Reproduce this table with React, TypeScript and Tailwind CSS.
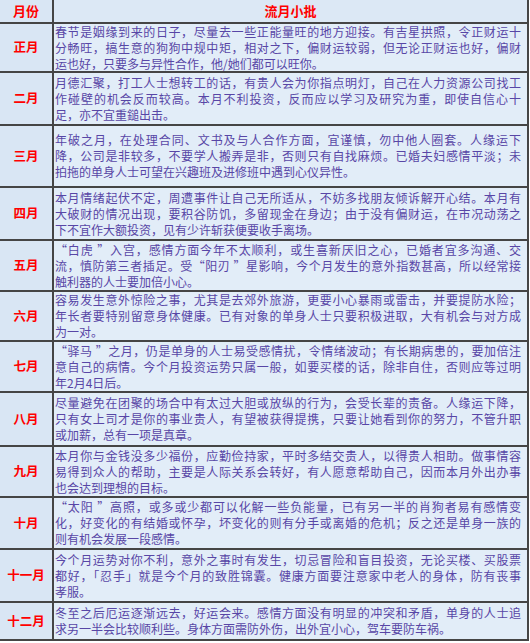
const rows = [
  {
    m: '正月',
    h: 'h-[49px]',
    lines: [
      '春节是姻缘到来的日子，尽量去一些正能量旺的地方迎接。有吉星拱照，令正财运十',
      '分畅旺，搞生意的狗狗中规中矩，相对之下，偏财运较弱，但无论正财运也好，偏财',
      '运也好，只要多与异性合作，他/她们都可以旺你。',
    ],
  },
  {
    m: '二月',
    h: 'h-[53px]',
    lines: [
      '月德汇聚，打工人士想转工的话，有贵人会为你指点明灯，自己在人力资源公司找工',
      '作碰壁的机会反而较高。本月不利投资，反而应以学习及研究为重，即使自信心十',
      '足，亦不宜重鎚出击。',
    ],
  },
  {
    m: '三月',
    h: 'h-[62px]',
    lines: [
      '年破之月，在处理合同、文书及与人合作方面，宜谨慎，勿中他人圈套。人缘运下',
      '降，公司是非较多，不要学人搬弄是非，否则只有自找麻烦。已婚夫妇感情平淡；未',
      '拍拖的单身人士可望在兴趣班及进修班中遇到心仪异性。',
    ],
  },
  {
    m: '四月',
    h: 'h-[53px]',
    lines: [
      '本月情绪起伏不定，周遭事件让自己无所适从，不妨多找朋友倾诉解开心结。本月有',
      '大破财的情况出现，要积谷防饥，多留现金在身边；由于没有偏财运，在市况动荡之',
      '下不宜作大额投资，见有少许斩获便要收手离场。',
    ],
  },
  {
    m: '五月',
    h: 'h-[51px]',
    lines: [
      '“白虎 ”入宫，感情方面今年不太顺利，或生喜新厌旧之心，已婚者宜多沟通、交',
      '流，慎防第三者插足。受“阳刃 ”星影响，今个月发生的意外指数甚高，所以经常接',
      '触利器的人士要加倍小心。',
    ],
  },
  {
    m: '六月',
    h: 'h-[50px]',
    lines: [
      '容易发生意外惊险之事，尤其是去郊外旅游，更要小心暴雨或雷击，并要提防水险；',
      '年长者要特别留意身体健康。已有对象的单身人士只要积极进取，大有机会与对方成',
      '为一对。',
    ],
  },
  {
    m: '七月',
    h: 'h-[51px]',
    lines: [
      '“驿马 ”之月，仍是单身的人士易受感情扰，令情绪波动；有长期病患的，要加倍注',
      '意自己的病情。今个月投资运势只属一般，如要买楼的话，除非自住，否则应等过明',
      '年2月4日后。',
    ],
  },
  {
    m: '八月',
    h: 'h-[54px]',
    lines: [
      '尽量避免在团聚的场合中有太过大胆或放纵的行为，会受长辈的责备。人缘运下降，',
      '只有女上司才是你的事业贵人，有望被获得提携，只要让她看到你的努力，不管升职',
      '或加薪，总有一项是真章。',
    ],
  },
  {
    m: '九月',
    h: 'h-[51px]',
    lines: [
      '本月你与金钱没多少福份，应勤俭持家，平时多结交贵人，以得贵人相助。做事情容',
      '易得到众人的帮助，主要是人际关系会转好，有人愿意帮助自己，因而本月外出办事',
      '也会达到理想的目标。',
    ],
  },
  {
    m: '十月',
    h: 'h-[52px]',
    lines: [
      '“太阳 ”高照，或多或少都可以化解一些负能量，已有另一半的肖狗者易有感情变',
      '化，好变化的有结婚或怀孕，坏变化的则有分手或离婚的危机；反之还是单身一族的',
      '则有机会发展一段感情。',
    ],
  },
  {
    m: '十一月',
    h: 'h-[53px]',
    lines: [
      '今个月运势对你不利，意外之事时有发生，切忌冒险和盲目投资，无论买楼、买股票',
      '都好，「忍手」就是今个月的致胜锦囊。健康方面要注意家中老人的身体，防有丧事',
      '孝服。',
    ],
  },
  {
    m: '十二月',
    h: 'h-[38px]',
    lines: [
      '冬至之后厄运逐渐远去，好运会来。感情方面没有明显的冲突和矛盾，单身的人士追',
      '求另一半会比较顺利些。身体方面需防外伤，出外宜小心，驾车要防车祸。',
    ],
  },
];

const App = () => {
  return (
    <div className="min-h-[643px] w-[530px] bg-white [font-family:'Noto_Sans_CJK_SC',sans-serif]">
      <div className="w-[529px]">
        {/* Header */}
        <div className="flex h-[24px] border-b-2 border-[#454545]">
          <div className="flex w-[54px] shrink-0 items-center justify-center border-r-2 border-[#454545] bg-[#d9e6f4] text-[13px] font-bold text-[#ff0000]">
            月份
          </div>
          <div className="flex flex-1 items-center justify-center border-r-2 border-[#454545] bg-[#dce8f5] text-[13px] font-bold text-[#ff0000]">
            流月小批
          </div>
        </div>

        {/* Months */}
        {rows.map((r) => (
          <div key={r.m} className={`flex ${r.h} border-b-2 border-[#454545]`}>
            <div className="flex w-[54px] shrink-0 items-center justify-center border-r-2 border-[#454545] bg-[#d9e6f4] text-[12.5px] font-bold text-[#ff0000]">
              {r.m}
            </div>
            <div className="flex flex-1 flex-col justify-center border-r-2 border-[#454545] bg-[#e2edf8] pl-px pr-[6px] text-[12px] leading-[16px] text-[#5846a6]">
              {r.lines.map((l, i) => (
                <div
                  key={i}
                  className={
                    i < r.lines.length - 1
                      ? 'whitespace-nowrap text-justify [text-align-last:justify]'
                      : 'whitespace-nowrap'
                  }
                >
                  {l}
                </div>
              ))}
            </div>
          </div>
        ))}
      </div>
    </div>
  );
};

export default App;
